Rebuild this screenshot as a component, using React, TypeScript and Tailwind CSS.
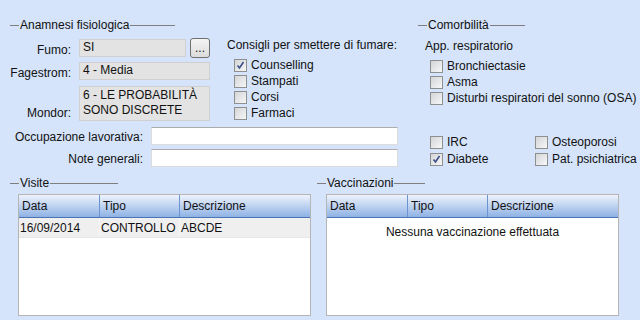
import React from 'react';

const GroupTitle = ({ title, className }: { title: string; className: string }) => (
  <div className={`flex items-center h-[15px] ${className}`}>
    <span className="w-[9px] h-px bg-[#7f7f7f]" />
    <span className="px-[1px] leading-[15px] whitespace-nowrap">{title}</span>
    <span className="flex-1 h-px bg-[#7f7f7f]" />
  </div>
);

const Box = ({ checked }: { checked?: boolean }) => (
  <span className="w-[13px] h-[13px] border border-[#8e8f8f] bg-linear-to-br from-[#d3d5d8] to-[#f7f7f7] flex items-center justify-center shrink-0">
    {checked && (
      <svg width="9" height="9" viewBox="0 0 9 9">
        <path d="M1.5 4.5 L3.5 7 L7.5 1" fill="none" stroke="#3b4f86" strokeWidth="1.6" />
      </svg>
    )}
  </span>
);

const Check = ({ label, checked }: { label: string; checked?: boolean }) => (
  <div className="flex items-center gap-[4px] h-[16px] whitespace-nowrap">
    <Box checked={checked} />
    <span className="leading-[16px]">{label}</span>
  </div>
);

const ReadField = ({ className, children }: { className: string; children?: React.ReactNode }) => (
  <div className={`bg-[#e3e3e3] border border-[#d0d0d0] px-[3px] leading-[15px] whitespace-nowrap ${className}`}>{children}</div>
);

const TextField = () => (
  <div className="h-[18px] bg-white border border-[#dcdcdc] border-t-[#acacac]" />
);

const Table = ({ rows, empty }: { rows: string[][]; empty?: string }) => (
  <div className="w-[293px] h-[122px] border border-[#b5b5b5] bg-white whitespace-nowrap">
    <div className="flex h-[23px] bg-linear-to-b from-[#eef3fc] to-[#8fb2e4] border-b border-[#4a74b4]">
      {['Data', 'Tipo', 'Descrizione'].map((h, i) => (
        <div
          key={h}
          className={`${i === 2 ? 'flex-1' : 'w-[80px]'} ${i > 0 ? 'border-l border-l-[#6b93cf]' : ''} pl-[3px] leading-[22px]`}
        >
          {h}
        </div>
      ))}
    </div>
    {rows.map((r) => (
      <div key={r[0]} className="flex h-[20px] bg-[#efefef] border-b border-[#e6e6e6]">
        {r.map((c, i) => (
          <div
            key={i}
            className={`${i === 2 ? 'flex-1' : 'w-[80px]'} ${i > 0 ? 'border-l border-l-[#f6f6f6]' : ''} pl-[1px] leading-[20px]`}
          >
            {c}
          </div>
        ))}
      </div>
    ))}
    {empty && <div className="text-center leading-[16px] mt-[6px]">{empty}</div>}
  </div>
);

export default function App() {
  return (
    <div className="w-[640px] h-[320px] overflow-hidden bg-[#d5e4fb] text-[12px] text-[#111] font-['Liberation_Sans',Arial,sans-serif]">
      <div className="flex pt-[18px]">
        <div className="pl-[10px] w-[418px] shrink-0">
          <GroupTitle title="Anamnesi fisiologica" className="w-[165px]" />
          <div className="flex mt-[5px]">
            <div className="grid grid-cols-[61px_131px] gap-x-[8px]">
              <div className="text-right self-end leading-[15px]">Fumo:</div>
              <div className="flex h-[20px] items-center">
                <ReadField className="w-[107px] h-[18px]">SI</ReadField>
                <div className="ml-auto w-[20px] h-[20px] rounded-[3px] border border-[#707070] bg-linear-to-b from-[#f4f4f4] to-[#dcdcdc] flex items-end justify-center leading-[12px] pb-[3px]">
                  ...
                </div>
              </div>
              <div className="text-right self-end leading-[15px] mt-[4px]">Fagestrom:</div>
              <ReadField className="h-[18px] mt-[4px]">4 - Media</ReadField>
              <div className="text-right self-end leading-[15px] mt-[5px]">Mondor:</div>
              <ReadField className="h-[35px] mt-[5px] leading-[15px] pt-px">
                6 - LE PROBABILITÀ
                <br />
                SONO DISCRETE
              </ReadField>
            </div>
            <div className="ml-[17px]">
              <div className="leading-[15px] whitespace-nowrap">Consigli per smettere di fumare:</div>
              <div className="pl-[7px] mt-[4px]">
                <Check label="Counselling" checked />
                <Check label="Stampati" />
                <Check label="Corsi" />
                <Check label="Farmaci" />
              </div>
            </div>
          </div>
          <div className="grid grid-cols-[133px_247px] grid-rows-[18px_18px] gap-x-[8px] gap-y-[4px] mt-[6px]">
            <div className="text-right leading-[20px] h-[18px] whitespace-nowrap">Occupazione lavorativa:</div>
            <TextField />
            <div className="text-right leading-[20px] h-[18px] whitespace-nowrap">Note generali:</div>
            <TextField />
          </div>
        </div>
        <div className="w-[222px] shrink-0">
          <GroupTitle title="Comorbilità" className="w-[107px]" />
          <div className="pl-[7px] mt-[6px] leading-[15px]">App. respiratorio</div>
          <div className="pl-[12px] mt-[4px]">
            <Check label="Bronchiectasie" />
            <Check label="Asma" />
            <Check label="Disturbi respiratori del sonno (OSA)" />
          </div>
          <div className="pl-[12px] mt-[28px] grid grid-cols-[105px_1fr] gap-y-px">
            <Check label="IRC" />
            <Check label="Osteoporosi" />
            <Check label="Diabete" checked />
            <Check label="Pat. psichiatrica" />
          </div>
        </div>
      </div>
      <div className="flex mt-[9px]">
        <div className="pl-[10px] w-[317px] shrink-0">
          <GroupTitle title="Visite" className="w-[108px]" />
          <div className="ml-[8px] mt-[3px]">
            <Table rows={[['16/09/2014', 'CONTROLLO', 'ABCDE']]} />
          </div>
        </div>
        <div className="shrink-0">
          <GroupTitle title="Vaccinazioni" className="w-[108px]" />
          <div className="ml-[9px] mt-[3px]">
            <Table rows={[]} empty="Nessuna vaccinazione effettuata" />
          </div>
        </div>
      </div>
    </div>
  );
}
